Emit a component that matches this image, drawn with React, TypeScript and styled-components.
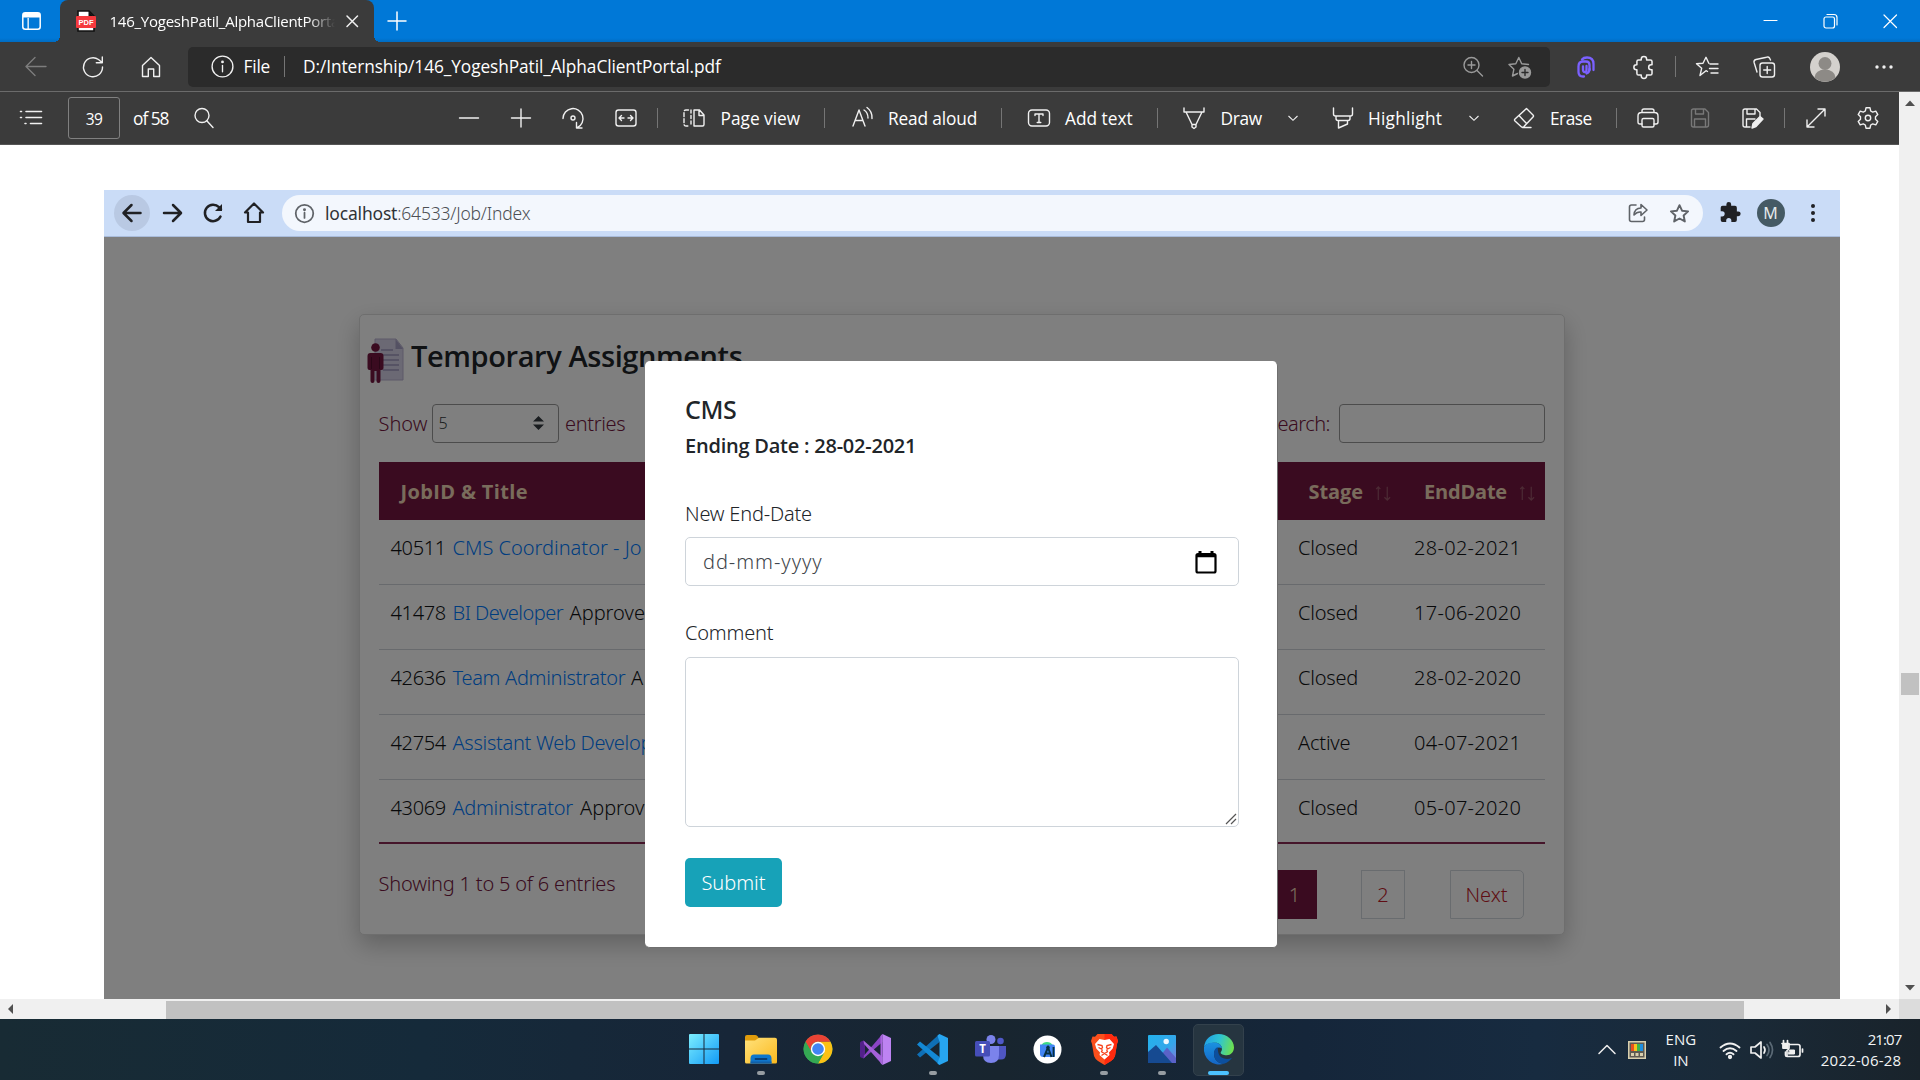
import React from 'react';
import styled, { createGlobalStyle } from 'styled-components';

const UI = '"Open Sans", "Noto Sans", sans-serif';
const DOC = '"Noto Sans", "Open Sans", sans-serif';

const GlobalStyle = createGlobalStyle`
  * { box-sizing: border-box; }
  body { margin: 0; width: 1920px; height: 1080px; overflow: hidden; background: #fff; }
  svg { display: block; flex: none; overflow: visible; }
`;

const Screen = styled.div`
  display: flex;
  flex-direction: column;
  width: 1920px;
  height: 1080px;
  overflow: hidden;
  font-family: ${UI};
`;

/* ---------- shared ---------- */

const Slot = styled.span<{ $ml?: number; $mr?: number; $w?: number; $c?: string }>`
  display: flex;
  flex: none;
  align-items: center;
  justify-content: center;
  width: ${p => p.$w ?? 24}px;
  height: 24px;
  margin-left: ${p => p.$ml ?? 0}px;
  margin-right: ${p => p.$mr ?? 0}px;
  color: ${p => p.$c ?? '#f0f0f0'};
`;

const Label = styled.span<{ $ml?: number; $w: number; $ls?: number }>`
  flex: none;
  width: ${p => p.$w}px;
  margin-left: ${p => p.$ml ?? 0}px;
  font-size: 17.3px;
  line-height: 24px;
  letter-spacing: ${p => p.$ls ?? 0}px;
  white-space: nowrap;
  color: #fff;
`;

const Rule = styled.span<{ $ml?: number; $h?: number }>`
  flex: none;
  width: 1px;
  height: ${p => p.$h ?? 20}px;
  margin-left: ${p => p.$ml ?? 0}px;
  background: #757575;
`;

const Spacer = styled.span`
  flex: 1;
`;

type IconProps = { size?: number; sw?: number; fill?: string; children: React.ReactNode };
const Icon = ({ size = 24, sw = 1.4, fill = 'none', children }: IconProps) => (
  <svg width={size} height={size} viewBox="0 0 24 24" fill={fill} stroke="currentColor" strokeWidth={sw} strokeLinecap="round" strokeLinejoin="round">
    {children}
  </svg>
);

/* ---------- browser frame ---------- */

const TabStrip = styled.div`
  display: flex;
  flex: none;
  align-items: center;
  height: 42px;
  padding-bottom: 1px;
  background: linear-gradient(#0078d7 0 38px, #006cc2 42px);
`;

const Tab = styled.div`
  position: relative;
  display: flex;
  align-items: center;
  width: 314px;
  height: 42px;
  margin: 0 0 -1px 19px;
  padding: 0 0 1px 16px;
  border-radius: 8px 8px 0 0;
  background: #3b3b3b;
  &::before, &::after {
    content: '';
    position: absolute;
    bottom: 0;
    width: 6px;
    height: 6px;
  }
  &::before { left: -6px; background: radial-gradient(circle at 0 0, transparent 6px, #3b3b3b 6px); }
  &::after { right: -6px; background: radial-gradient(circle at 100% 0, transparent 6px, #3b3b3b 6px); }
`;

const TabTitle = styled.span`
  width: 225px;
  margin-left: 13.5px;
  overflow: hidden;
  font-size: 15px;
  line-height: 24px;
  letter-spacing: -0.24px;
  white-space: nowrap;
  color: #fff;
  mask-image: linear-gradient(90deg, #000 198px, transparent 225px);
`;

const AddressRow = styled.div`
  display: flex;
  flex: none;
  align-items: center;
  height: 50px;
  border-bottom: 1px solid #6b6b6b;
  background: #3b3b3b;
`;

const AddressBox = styled.div`
  display: flex;
  flex: none;
  align-items: center;
  width: 1362px;
  height: 40px;
  margin-left: 25px;
  padding: 0 18px 0 22px;
  border-radius: 5px;
  background: #2b2b2b;
`;

const Body = styled.div`
  display: flex;
  flex: none;
  height: 907px;
`;

const Viewer = styled.div`
  display: flex;
  flex-direction: column;
  width: 1899px;
  background: #fff;
`;

const PdfBar = styled.div`
  display: flex;
  flex: none;
  align-items: center;
  height: 53px;
  border-bottom: 1px solid #555;
  background: #3b3b3b;
  ${Label} { margin-top: 2px; }
`;

const PageInput = styled.span`
  display: flex;
  flex: none;
  align-items: center;
  justify-content: center;
  width: 52px;
  height: 42px;
  margin-left: 25px;
  padding-top: 2px;
  border: 1px solid #808080;
  border-radius: 3px;
  font-size: 15.5px;
  letter-spacing: -0.6px;
  color: #fff;
`;

const VScroll = styled.div`
  display: flex;
  flex-direction: column;
  align-items: center;
  width: 21px;
  background: #f0f0f0;
  color: #505050;
`;

const VThumb = styled.div`
  width: 18px;
  height: 22px;
  margin-top: 564px;
  background: #c1c1c1;
`;

const HScroll = styled.div`
  display: flex;
  flex: none;
  align-items: center;
  height: 20px;
  background: #f0f0f0;
  color: #505050;
`;

const HThumb = styled.div`
  width: 1578px;
  height: 18px;
  margin: 2px 0 0 154px;
  background: #c1c1c1;
`;

const ScrollCorner = styled.div`
  width: 21px;
  height: 20px;
  background: #dcdcdc;
`;

/* ---------- document page ---------- */

const Sheet = styled.div`
  display: flex;
  flex-direction: column;
  width: 1736px;
  height: 809px;
  margin: 45px 0 0 104px;
`;

const ChromeBar = styled.div`
  display: flex;
  flex: none;
  align-items: center;
  height: 47px;
  border-bottom: 1px solid #a9bcdb;
  background: #cadcf7;
`;

const BackCircle = styled.span`
  display: flex;
  align-items: center;
  justify-content: center;
  width: 36px;
  height: 36px;
  margin-left: 10px;
  border-radius: 50%;
  background: #b9c9e3;
  color: #202124;
`;

const Pill = styled.div`
  display: flex;
  align-items: center;
  width: 1421px;
  height: 36px;
  margin-left: 16px;
  padding: 0 12px 0 11.5px;
  border-radius: 18px;
  background: #f3f7fd;
`;

const Url = styled.span`
  margin-left: 9.5px;
  font-family: ${DOC};
  font-size: 17.5px;
  font-weight: 300;
  line-height: 24px;
  letter-spacing: -0.19px;
  color: #4c4f54;
  b { font-weight: 400; color: #303236; }
`;

const Monogram = styled.span`
  display: flex;
  align-items: center;
  justify-content: center;
  width: 28px;
  height: 28px;
  margin-left: 14.5px;
  border-radius: 50%;
  background: #455a64;
  font-family: ${DOC};
  font-size: 16px;
  color: #e4e9eb;
`;

const Site = styled.div`
  position: relative;
  flex: 1;
  overflow: hidden;
  background: #fff;
  font-family: ${DOC};
  font-size: 20px;
  font-weight: 300;
  line-height: 27px;
  color: #101214;
`;

const Card = styled.div`
  width: 1206px;
  height: 621px;
  margin: 77px 0 0 254.5px;
  padding: 23px 18.5px 0 19px;
  border: 1px solid #dcdcdc;
  border-radius: 5px;
  background: #fff;
  box-shadow: 0 10px 24px rgba(0, 0, 0, 0.24);
`;

const TitleRow = styled.div`
  display: flex;
  height: 45px;
  margin-left: -11.5px;
`;

const Title = styled.h4`
  margin: -2px 0 0 7px;
  font-family: ${UI};
  font-size: 29px;
  font-weight: 600;
  line-height: 40px;
  letter-spacing: -0.4px;
  white-space: nowrap;
  color: #212529;
`;

const Controls = styled.div`
  display: flex;
  align-items: center;
  height: 39px;
  margin-top: 20.5px;
  color: #741640;
`;

const LengthSelect = styled.span`
  display: flex;
  align-items: center;
  justify-content: space-between;
  width: 127px;
  height: 39px;
  margin: 0 5.5px 0 5px;
  padding: 0 14px 0 5px;
  border: 1.5px solid #999;
  border-radius: 4px;
  font-size: 16px;
  color: #343a40;
`;

const Tight = styled.span<{ $ls: number }>`
  letter-spacing: ${p => p.$ls}px;
`;

const SearchInput = styled.span`
  width: 206px;
  height: 39px;
  margin-left: 9px;
  border: 1.5px solid #999;
  border-radius: 4px;
`;

const columns = '1fr 116px 131px';

const Table = styled.div`
  margin-top: 19.5px;
`;

const HeadRow = styled.div`
  display: grid;
  grid-template-columns: ${columns};
  align-items: center;
  height: 58px;
  padding-left: 22px;
  background: #741640;
  font-family: ${UI};
  font-weight: 700;
  color: #f3d9b8;
`;

const HeadCell = styled.div<{ $ml?: number; $ls: number }>`
  display: flex;
  align-items: center;
  gap: 11px;
  margin-left: ${p => p.$ml ?? 0}px;
  letter-spacing: ${p => p.$ls}px;
  white-space: nowrap;
  svg { margin-top: 3px; }
`;

const BodyRow = styled.div`
  display: grid;
  grid-template-columns: ${columns};
  height: 65px;
  padding: 13.5px 0 0 12px;
  border-bottom: 1px solid #d0d5da;
  white-space: nowrap;
  &:last-child { height: 64px; border-bottom: 2px solid #8a2a55; }
`;

const TitleCell = styled.div`
  display: flex;
`;

const JobId = styled.span`
  flex: none;
  width: 62px;
  letter-spacing: -0.35px;
`;

const JobLink = styled.a<{ $w: number; $ls: number }>`
  flex: none;
  width: ${p => p.$w}px;
  letter-spacing: ${p => p.$ls}px;
  color: #007bff;
`;

const Footer = styled.div`
  display: flex;
  justify-content: space-between;
  padding-right: 21.5px;
  color: #741640;
`;

const Summary = styled.span`
  margin-top: 26px;
  letter-spacing: -0.2px;
`;

const Pager = styled.div`
  display: flex;
  gap: 44.5px;
  margin-top: 26px;
`;

const PageButton = styled.span<{ $w: number; $on?: boolean; $r?: number }>`
  display: flex;
  align-items: center;
  justify-content: center;
  width: ${p => p.$w}px;
  height: 49px;
  border: 1px solid ${p => (p.$on ? '#741640' : '#d3d9de')};
  border-radius: 0 ${p => p.$r ?? 0}px ${p => p.$r ?? 0}px 0;
  background: ${p => (p.$on ? '#741640' : 'transparent')};
  color: ${p => (p.$on ? '#f3d9b8' : '#c01a28')};
`;

const Backdrop = styled.div`
  position: absolute;
  inset: 0;
  background: rgba(0, 0, 0, 0.5);
`;

const Modal = styled.form`
  position: absolute;
  top: 124px;
  left: 541px;
  display: flex;
  flex-direction: column;
  align-items: flex-start;
  width: 633px;
  height: 587px;
  padding: 33px 0 0 40px;
  border: 1px solid #6f6f6f;
  border-width: 0 1px 1px 0;
  border-radius: 5px;
  background: #fff;
  color: #212529;
`;

const ModalTitle = styled.h5`
  margin: 0;
  font-size: 25px;
  font-weight: 500;
  line-height: 30px;
  letter-spacing: -0.4px;
`;

const EndingDate = styled.h6`
  margin: 8px 0 0;
  font-family: ${UI};
  font-size: 20px;
  font-weight: 600;
  line-height: 27px;
  letter-spacing: -0.23px;
`;

const FieldLabel = styled.label<{ $mt: number }>`
  height: 27px;
  margin-top: ${p => p.$mt}px;
  letter-spacing: -0.2px;
`;

const DateField = styled.div`
  display: flex;
  align-items: center;
  justify-content: space-between;
  width: 554px;
  height: 49px;
  margin-top: 10.5px;
  padding: 0 21px 0 17px;
  border: 1.5px solid #ced4da;
  border-radius: 5px;
  letter-spacing: 0.95px;
  color: #3f464c;
`;

const CommentField = styled.div`
  display: flex;
  align-items: flex-end;
  justify-content: flex-end;
  width: 554px;
  height: 170px;
  margin-top: 11px;
  padding: 1px;
  border: 1.5px solid #ced4da;
  border-radius: 5px;
  color: #555;
`;

const Submit = styled.button`
  width: 97px;
  height: 49px;
  margin-top: 30.5px;
  padding: 0;
  border: 0;
  border-radius: 5px;
  background: #17a2b8;
  font: 300 20px/27px ${DOC};
  color: #fff;
`;

/* ---------- taskbar ---------- */

const Taskbar = styled.div`
  display: flex;
  flex: none;
  align-items: center;
  height: 61px;
  padding-left: 678.5px;
  background: linear-gradient(90deg, #182b34 0, #152a3a 22%, #172638 38%, #18252f 52%, #15263a 68%, #172b40 80%, #1a2a38 90%, #19232b 100%);
`;

const TaskButton = styled.div<{ $active?: boolean }>`
  display: flex;
  flex-direction: column;
  align-items: center;
  justify-content: flex-end;
  width: 51.2px;
  height: 52px;
  margin-right: 6px;
  border: 1px solid ${p => (p.$active ? '#33414c' : 'transparent')};
  border-radius: 5px;
  background: ${p => (p.$active ? '#263540' : 'transparent')};
`;

const IconBox = styled.span`
  display: flex;
  flex: none;
  align-items: center;
  height: 31px;
`;

const Indicator = styled.span<{ $kind?: 'open' | 'active' }>`
  flex: none;
  width: ${p => (p.$kind === 'active' ? 21 : 8)}px;
  height: 4px;
  margin-top: 6px;
  border-radius: 2px;
  background: ${p => (p.$kind === 'active' ? '#4cc2ff' : p.$kind === 'open' ? '#979da2' : 'transparent')};
`;

const TrayText = styled.span<{ $ml: number; $w: number; $right?: boolean }>`
  flex: none;
  width: ${p => p.$w}px;
  margin: 1px 0 0 ${p => p.$ml}px;
  font-size: 15px;
  line-height: 21px;
  text-align: ${p => (p.$right ? 'right' : 'center')};
  white-space: nowrap;
  color: #f2f4f5;
`;

/* ---------- drawings ---------- */

const Info = ({ size = 24, sw = 1.3 }: { size?: number; sw?: number }) => (
  <Icon size={size} sw={sw}><circle cx="12" cy="12" r="10" /><path d="M12 11v6" /><circle cx="12" cy="7.6" r=".7" fill="currentColor" /></Icon>
);

const Chevron = () => (
  <svg width="12" height="12" viewBox="0 0 12 12" fill="none" stroke="currentColor" strokeWidth="1.1"><path d="M1.500 4 6 8.300 10.500 4" /></svg>
);

const Sort = () => (
  <svg width="18" height="17" viewBox="0 0 18 18" fill="none" stroke="#985468" strokeWidth="1.300">
    <path d="M4 17V3M1.800 5.500 4 3l2.200 2.500M13.500 3v14M10.500 14l3 3 3-3" />
  </svg>
);

const PdfIcon = () => (
  <svg width="20" height="22" viewBox="0 0 20 22">
    <path d="M2 1h11l5 5v15H2z" fill="#fff" stroke="#111" strokeWidth="1.600" />
    <path d="M12.500 1v5.500H18z" fill="#111" />
    <rect x="0" y="6" width="20" height="12" rx="1" fill="#f5393d" />
    <text x="10" y="15" fontSize="7.500" fontWeight="700" fontFamily="Liberation Sans, sans-serif" textAnchor="middle" fill="#fff" textLength="15">PDF</text>
  </svg>
);

const JobIcon = () => (
  <svg width="37" height="45" viewBox="0 0 37 45">
    <path d="M8 1h21l7 9v32H8z" fill="#d7d3e8" stroke="#b9b3d2" />
    <path d="M28.500 1v10H36z" fill="#a9a2c6" />
    <path d="M14 12h12M16 17h16M16 22h16M16 27h16M16 32h16" stroke="#a098bd" strokeWidth="1.500" />
    <circle cx="8.500" cy="9.500" r="4.300" fill="#741640" />
    <path d="M3.500 15h10q3 0 3 3v12q0 2-2 2h-1v11q0 2-2 2t-2-2V33h-2v10q0 2-2 2t-2-2V32h-1q-2 0-2-2V18q0-3 3-3z" fill="#741640" />
    <path d="M4.500 19v12M12.500 19v12" stroke="#4c0d29" strokeWidth=".8" />
  </svg>
);

const WindowsIcon = () => (
  <svg width="30" height="30" viewBox="0 0 30 30">
    <defs><linearGradient id="win" gradientUnits="userSpaceOnUse" x1="0" y1="0" x2="30" y2="30"><stop offset="0" stopColor="#7ceefe" /><stop offset="1" stopColor="#129af6" /></linearGradient></defs>
    <path d="M1 0h13.500v14.500H0V1q0-1 1-1zM15.500 0H29q1 0 1 1v13.500H15.500zM0 15.500h14.500V30H1q-1 0-1-1zM15.500 15.500H30V29q0 1-1 1H15.500z" fill="url(#win)" />
  </svg>
);

const ExplorerIcon = () => (
  <svg width="32" height="29" viewBox="0 0 32 29">
    <defs><linearGradient id="fold" x1="0" y1="0" x2="1" y2="1"><stop offset="0" stopColor="#ffe27c" /><stop offset="1" stopColor="#fbb91e" /></linearGradient></defs>
    <path d="M0 2q0-2 2-2h8q1.500 0 2.500 1.200L14.500 4 12 9H0z" fill="#e09c0b" />
    <path d="M0 5.500h10l4-2.700h16q2 0 2 2V27q0 1.500-1.500 1.500h-29Q0 28.500 0 27z" fill="url(#fold)" />
    <path d="M5.500 28.500v-5q0-4 3.500-4h14q3.500 0 3.500 4v5z" fill="#0f76cc" />
    <path d="M5.500 28.500v-2h21v2z" fill="#1260a8" />
    <path d="M10.500 24h11" stroke="#0a3f77" strokeWidth="1.800" strokeLinecap="round" />
  </svg>
);

const ChromeIcon = () => (
  <svg width="30" height="30" viewBox="0 0 48 48">
    <circle cx="24" cy="24" r="23" fill="#34a853" />
    <path d="M24 12.500h19.920A23 23 0 0 1 24 47l9.960-17.250z" fill="#fbc116" />
    <path d="M4.080 12.500a23 23 0 0 1 39.840 0H24a11.500 11.500 0 0 0-9.960 17.250z" fill="#ea4335" />
    <path d="M4.080 12.500A23 23 0 0 0 24 47l9.960-17.250-19.920 0z" fill="#34a853" />
    <circle cx="24" cy="24" r="11.500" fill="#fff" /><circle cx="24" cy="24" r="9.300" fill="#4285f4" />
  </svg>
);

const VisualStudioIcon = () => (
  <svg width="31" height="31" viewBox="0 0 31 31">
    <path d="M0 9q0-1 1-1.500L3.500 6.500 5 8v15l-1.500 1.500L1 23.500q-1-.5-1-1.500z" fill="#52218a" />
    <path d="M3.500 24.500 22.500 8V0L4 21.500z" fill="#8b45c4" />
    <path d="M3.500 6.500 22.500 23v8L4 10z" fill="#a361d8" />
    <path d="M22.500 0 31 4v23l-8.500 4z" fill="#bd83f2" />
    <path d="M22.500 0v31l-2-2V2z" fill="#a767dd" />
  </svg>
);

const CodeIcon = () => (
  <svg width="31" height="31" viewBox="0 0 31 31">
    <path d="M0 20.500 22.500 0v8L3 23.500z" fill="#0f6fb5" />
    <path d="M0 10.500 22.500 31v-8L3 7.500z" fill="#1388d4" />
    <path d="M22.500 0 31 4v23l-8.500 4-2-1.500L22.500 23V8l-2-6.500z" fill="#27a5f0" />
  </svg>
);

const TeamsIcon = () => (
  <svg width="31" height="29" viewBox="0 0 31 29">
    <circle cx="25.500" cy="6" r="3.300" fill="#5059c9" />
    <path d="M21 11h10v8q0 5.500-5 5.500h-5z" fill="#4f56c2" />
    <circle cx="16" cy="4.500" r="4.500" fill="#7b83eb" />
    <path d="M8 11h16v9q0 8-8 8t-8-8z" fill="#7b83eb" />
    <rect x="0" y="6" width="15" height="15.500" rx="1.500" fill="#464eb8" />
    <text x="7.500" y="17.800" fontSize="11.500" fontWeight="700" fontFamily="Open Sans, sans-serif" textAnchor="middle" fill="#fff">T</text>
  </svg>
);

const StudioIcon = () => (
  <svg width="29" height="29" viewBox="0 0 29 29">
    <circle cx="14.500" cy="14.500" r="14" fill="#fff" />
    <path d="M8.500 10a6 5 0 0 1 11 0z" fill="#3ddc84" />
    <path d="M7 9.500h13q2 0 2 2V21q0 1-1 1H10q-3 0-3-3z" fill="#4285f4" />
    <path d="M11 22 15 12.500 18.500 22M12.500 18.500h5" stroke="#073042" strokeWidth="2" fill="none" />
    <path d="M20.500 12V22" stroke="#073042" strokeWidth="1.800" />
    <circle cx="15" cy="12.500" r="1.800" fill="#073042" />
  </svg>
);

const BraveIcon = () => (
  <svg width="27" height="31" viewBox="0 0 27 31">
    <path d="M6.500 0h14l2.500 2.800 2.500-.3L27 7l-1 3-2 12q-1 3-4 5l-6.500 4L7 27q-3-2-4-5L1 10 0 7l1.500-4.500 2.500.3z" fill="#fb4f1c" />
    <path d="M13.500 0h7l2.500 2.800 2.500-.3L27 7l-1 3-2 12q-1 3-4 5l-6.500 4z" fill="#ff2a0e" />
    <path d="M8.500 5 13.500 6 18.500 5l4.500 5-1.300 4.500-3.700 4 .5 2.500-5 4.500L8.500 21l.5-2.500-3.700-4L4 10z" fill="#fff" />
    <path d="M6.500 10.500 11 11.500l.5 2-1.200 1.500-2.800-1.500M20.500 10.500 16 11.500l-.5 2 1.200 1.500 2.800-1.500M11.500 15.500l-1 2.300 3 1.700 3-1.700-1-2.300M13.500 19.500l-3 2M13.500 19.500l3 2" fill="none" stroke="#f8421a" strokeWidth="1.300" />
  </svg>
);

const PhotosIcon = () => (
  <svg width="28" height="28" viewBox="0 0 28 28">
    <defs><linearGradient id="pic" x1="0" y1="0" x2="1" y2="1"><stop offset="0" stopColor="#22b1ec" /><stop offset=".6" stopColor="#36a6ea" /><stop offset="1" stopColor="#8b76d6" /></linearGradient></defs>
    <rect width="28" height="28" rx="1" fill="url(#pic)" />
    <path d="M13 20 19 12.500 28 23v5H13z" fill="#5a62c8" />
    <path d="M0 17 8 10 24 28H0z" fill="#164a91" />
    <circle cx="18.200" cy="6.500" r="2.700" fill="#f0f8ff" />
  </svg>
);

const EdgeIcon = () => (
  <svg width="31" height="31" viewBox="0 0 31 31">
    <defs>
      <linearGradient id="e1" x1="0" y1=".3" x2="1" y2=".5"><stop offset="0" stopColor="#219fe6" /><stop offset=".5" stopColor="#2fc5d1" /><stop offset="1" stopColor="#6ee04e" /></linearGradient>
      <linearGradient id="e2" x1="0" y1="0" x2="0" y2="1"><stop offset="0" stopColor="#1a92e0" /><stop offset="1" stopColor="#1565c5" /></linearGradient>
    </defs>
    <path d="M1 13C2 5 8 0 15.500 0 24 0 31 6 31 13.500c0 4.500-3.300 7.700-7.300 7.700-3.500 0-6-1.200-6-2.500 0-1 1.300-1.500 1.300-4 0-3.200-3-5.900-6.800-5.900C7.500 8.800 3 10 1 13z" fill="url(#e1)" />
    <path d="M1 13c2-3.500 6.500-4.500 10-4.500 4.500 0 8 2.800 8 6C15 11.500 11 15 11 20c0 6 5 10 10 9.800A15.500 15.500 0 0 1 1 13z" fill="url(#e2)" />
    <path d="M14.500 13C11.500 14.500 11 17.500 11 20c0 6 5 10 10 9.800 3.500-1 6.500-3.500 8-6-5 2.500-12 1-13.500-4.500-.7-2.500-.5-4.500-1-6.300z" fill="#0c4f9e" />
  </svg>
);

const apps: { name: string; draw: () => React.ReactElement; state?: 'open' | 'active' }[] = [
  { name: 'start', draw: WindowsIcon },
  { name: 'explorer', draw: ExplorerIcon, state: 'open' },
  { name: 'chrome', draw: ChromeIcon },
  { name: 'visual-studio', draw: VisualStudioIcon },
  { name: 'code', draw: CodeIcon, state: 'open' },
  { name: 'teams', draw: TeamsIcon },
  { name: 'android-studio', draw: StudioIcon },
  { name: 'brave', draw: BraveIcon, state: 'open' },
  { name: 'photos', draw: PhotosIcon, state: 'open' },
  { name: 'edge', draw: EdgeIcon, state: 'active' },
];

const jobs = [
  { id: '40511', title: 'CMS Coordinator - Jo', w: 210, ls: 0, stage: 'Closed', end: '28-02-2021' },
  { id: '41478', title: 'BI Developer', w: 117, ls: -0.5, stage: 'Closed', end: '17-06-2020', status: 'Approve' },
  { id: '42636', title: 'Team Administrator', w: 178.5, ls: -0.3, stage: 'Closed', end: '28-02-2020', status: 'A' },
  { id: '42754', title: 'Assistant Web Develop', w: 230, ls: -0.3, stage: 'Active', end: '04-07-2021' },
  { id: '43069', title: 'Administrator', w: 127.5, ls: -0.3, stage: 'Closed', end: '05-07-2020', status: 'Approve' },
];

const PUZZLE = 'M9 5.500V4.800a2.500 2.500 0 0 1 5 0v.7h3.500a1.500 1.500 0 0 1 1.500 1.500v3h-.8a2.300 2.300 0 0 0 0 4.600h.8v3.400a1.500 1.500 0 0 1-1.500 1.500H14v.7a2.500 2.500 0 0 1-5 0v-.7H6.500A1.500 1.500 0 0 1 5 18v-3.400h-.5a2.300 2.300 0 0 1 0-4.600H5V7a1.500 1.500 0 0 1 1.500-1.500z';
const STAR = 'M12 2.500l2.900 6.300 6.900.8-5.100 4.700 1.400 6.800L12 17.700l-6.100 3.400 1.400-6.800-5.100-4.700 6.900-.8z';

export default function App() {
  return (
    <Screen>
      <GlobalStyle />
      <TabStrip>
        <Slot $ml={19.5} $mr={-2.5} $c="#fff">
          <svg width="19" height="18" viewBox="0 0 19 18"><rect x=".8" y=".8" width="17.400" height="16.400" rx="2.500" fill="none" stroke="#fff" strokeWidth="1.500" /><path d="M1 1h17v4.500H1zM5.500 5v12h1.300V5z" fill="#fff" /></svg>
        </Slot>
        <Tab>
          <PdfIcon />
          <TabTitle>146_YogeshPatil_AlphaClientPortal.pdf</TabTitle>
          <Slot $ml={5}><Icon sw={1.500}><path d="M7 7l10.500 10.500M17.500 7 7 17.500" /></Icon></Slot>
        </Tab>
        <Slot $ml={11} $c="#fff"><Icon sw={1.500}><path d="M12 3v18M3 12h18" /></Icon></Slot>
        <Spacer />
        <Slot $c="#fff"><Icon sw={1.200}><path d="M5 11.500h13" /></Icon></Slot>
        <Slot $ml={36} $c="#fff"><Icon sw={1.200}><rect x="5" y="8" width="10.500" height="11" rx="2" /><path d="M8 5.500h7q3 0 3 3V16" /></Icon></Slot>
        <Slot $ml={36} $mr={17} $c="#fff"><Icon sw={1.200}><path d="M5 6l12.500 12.500M17.500 6 5 18.500" /></Icon></Slot>
      </TabStrip>

      <AddressRow>
        <Slot $ml={24} $c="#7d7d7d"><Icon><path d="M22 11.500H2.500M11 2.500l-9 9 9 9" /></Icon></Slot>
        <Slot $ml={33}><Icon><path d="M21.500 12A9.500 9.500 0 1 1 17.500 4.500l3.500 3M21.300 2v5.800h-6" /></Icon></Slot>
        <Slot $ml={34}><Icon><path d="M3.500 10.500 12 2.500l8.500 8V21.500h-5.800V14H9.300v7.500H3.500z" /></Icon></Slot>
        <AddressBox>
          <Slot><Info size={25} /></Slot>
          <Label $ml={9.500} $w={28} $ls={-0.200}>File</Label>
          <Rule $ml={12.500} $h={21} />
          <Label $ml={18} $w={430} $ls={-0.080}>D:/Internship/146_YogeshPatil_AlphaClientPortal.pdf</Label>
          <Spacer />
          <Slot $c="#9a9a9a"><Icon><circle cx="10.500" cy="10" r="7.500" /><path d="M16 15.500l5.500 5.500M10.500 6.500v7M7 10h7" /></Icon></Slot>
          <Slot $ml={23} $c="#9a9a9a"><Icon><path d="M9.500 18.500 4.500 21l1.400-6.800L1 9.500l6.800-.8L10.800 2.500l2.900 6.200 6.800.8" /><circle cx="17" cy="17.500" r="5.500" fill="#9a9a9a" /><path d="M17 14.500v6M14 17.500h6" stroke="#2b2b2b" /></Icon></Slot>
        </AddressBox>
        <Slot $ml={24} $c="#7b61ff"><Icon sw={2.300}><path d="M8 4.500Q9.500 2.500 13 2.500q6.500 0 6.500 6.500v6" /><path d="M15.500 15V10q0-3.500-3.500-3.500H9q-4.500 0-4.500 5V17q0 4.500 4.500 4.500h1" /><path d="M12.500 11v4q0 2-1.700 2T9 15v-3.500" /><path d="M15.500 14q0 3.500-3 4.500" /></Icon></Slot>
        <Slot $ml={34}><Icon><path d={PUZZLE} transform="translate(-.5 -1) scale(1.080)" /></Icon></Slot>
        <Rule $ml={19} $h={21} />
        <Slot $ml={19}><Icon><path d="M12.500 16.500l-1.500-.8-6 4.800 1.700-7.300L1.500 8.800l6.500-.6L11 2.300l2.800 5.900M15 9h8M14.500 13.500H23M16 18h7" /></Icon></Slot>
        <Slot $ml={33}><Icon><rect x="8" y="8" width="14.500" height="14" rx="2.500" /><path d="M15.200 11.500v7M11.700 15h7M18.500 5l-1-2q-1-1.500-3-.8L4 4.500q-2.500.8-1.900 3L5 17" /></Icon></Slot>
        <Slot $ml={34} $w={30}>
          <svg width="30" height="30" viewBox="0 0 30 30"><circle cx="15" cy="15" r="15" fill="#d4d1cd" /><circle cx="15" cy="11.500" r="6.500" fill="#8d8a86" /><path d="M4.500 25.500a10.500 8 0 0 1 21 0A15 15 0 0 1 4.500 25.500z" fill="#8d8a86" /></svg>
        </Slot>
        <Slot $ml={32}><Icon sw={0} fill="currentColor"><circle cx="5" cy="12" r="1.700" /><circle cx="12" cy="12" r="1.700" /><circle cx="19" cy="12" r="1.700" /></Icon></Slot>
      </AddressRow>

      <Body>
        <Viewer>
          <PdfBar>
            <Slot $ml={19}><Icon sw={1.600}><path d="M7 5.500H22.500M7 11.500H22.500M11.500 17.500h11M1.500 5.500h1M1.500 11.500h1M6 17.500h1" /></Icon></Slot>
            <PageInput>39</PageInput>
            <Label $ml={13} $w={36} $ls={-1}>of 58</Label>
            <Slot $ml={22.500}><Icon><circle cx="10" cy="9.500" r="7" /><path d="M14.800 14.700 21 21.500" /></Icon></Slot>
            <Slot $ml={241.500}><Icon><path d="M2.500 12h19" /></Icon></Slot>
            <Slot $ml={28}><Icon><path d="M12 3v18M2.500 12h19" /></Icon></Slot>
            <Slot $ml={28}><Icon><path d="M2 12.500A10 10 0 1 1 16.500 21.500M15.500 16.500v5.500h5.500" /><circle cx="12" cy="12" r="2" /></Icon></Slot>
            <Slot $ml={28.500}><Icon><rect x="2" y="4" width="20" height="16" rx="2.500" /><path d="M5.500 12H10M7.500 9.500 5 12l2.500 2.500M18.500 12H14M16.500 9.500 19 12l-2.500 2.500" /></Icon></Slot>
            <Rule $ml={19} />
            <Slot $ml={24.500}><Icon><path d="M13 4h4.500L22 9v9.500q0 1.500-1.500 1.500H12V4zM17 4v5.500h5" /><path d="M9 4v16" strokeDasharray="3 2.500" /><path d="M6.500 4H4Q2 4 2 6v12q0 2 2 2h2.500" strokeDasharray="4 2" /></Icon></Slot>
            <Label $ml={14.500} $w={80}>Page view</Label>
            <Rule $ml={23.500} />
            <Slot $ml={25}><Icon><path d="M3 20 9 4l6 16M5 14.500h8M14 4q4 2.500 4 8M17 1.500q5.500 4 5 11" /></Icon></Slot>
            <Label $ml={14} $w={90} $ls={-0.150}>Read aloud</Label>
            <Rule $ml={23} />
            <Slot $ml={25}><Icon><rect x="1.500" y="4" width="21" height="16" rx="3.500" /><path d="M8 9.500V8h8v1.500M12 8v8.500M10.200 16.500h3.600" /></Icon></Slot>
            <Label $ml={14} $w={69}>Add text</Label>
            <Rule $ml={23} />
            <Slot $ml={24}><Icon><path d="M2 2v4h20V2M4 6l6 12.500V21l2 1.500 2-1.500v-2.500L20 6M10 18.500h4" /></Icon></Slot>
            <Label $ml={14.500} $w={42} $ls={-0.300}>Draw</Label>
            <Slot $ml={24.500} $w={12}><Chevron /></Slot>
            <Slot $ml={32}><Icon><path d="M2.500 2v6q0 2 2 2h15q2 0 2-2V2M5 10v2.500q0 2 2 2h10q2 0 2-2V10M7.500 14.500v7.500l9-4v-3.500" /></Icon></Slot>
            <Label $ml={13} $w={75} $ls={0.250}>Highlight</Label>
            <Slot $ml={25} $w={12}><Chevron /></Slot>
            <Slot $ml={32}><Icon><path d="M14.500 2.500l6.500 6.500q1 1 0 2L12 20.500q-1.500 1.500-3 0L3 15q-1-1 0-2zM7 9.500l7.500 8M10.500 21.500H19" /></Icon></Slot>
            <Label $ml={14} $w={42} $ls={-0.500}>Erase</Label>
            <Rule $ml={23.500} />
            <Slot $ml={19.500}><Icon><path d="M6 6.500V5q0-2 2-2h8q2 0 2 2v1.500M6 18H4q-2 0-2-2v-6q0-3.500 3.500-3.500h13Q22 6.500 22 10v6q0 2-2 2h-2" /><rect x="6" y="12.500" width="12" height="8.500" rx="1.500" /></Icon></Slot>
            <Slot $ml={28} $c="#787878"><Icon><path d="M3.500 5q0-2 2-2H17l3.500 3.500V19q0 2-2 2h-13q-2 0-2-2zM7.500 3v5h8V3M6.500 21v-8h11v8" /></Icon></Slot>
            <Slot $ml={28}><Icon><path d="M10 21H5q-2 0-2-2V5q0-2 2-2h11.500L20 6.500V10M7 3v5h8V3M6.500 21v-8H15" /><path d="M12 22l1-4.500 7-7 3 2.500-7 7.500z" fill="currentColor" /></Icon></Slot>
            <Rule $ml={20} />
            <Slot $ml={19}><Icon><path d="M3 21 21 3M14 3h7v7M10 21H3v-7" /></Icon></Slot>
            <Slot $ml={28}><Icon><circle cx="12" cy="12" r="2.700" /><path d="M10 1.800h4l.7 3.200 2 1.100 3.100-1 2 3.500-2.300 2.200v2.400l2.300 2.200-2 3.500-3.100-1-2 1.100-.7 3.200h-4l-.7-3.200-2-1.100-3.100 1-2-3.500 2.300-2.200v-2.400L2.200 8.600l2-3.500 3.100 1 2-1.100z" /></Icon></Slot>
          </PdfBar>

          <Sheet>
            <ChromeBar>
              <BackCircle><Icon sw={2.500}><path d="M20.500 12H4M11.500 4 3.500 12l8 8" /></Icon></BackCircle>
              <Slot $ml={11} $c="#202124"><Icon sw={2.500}><path d="M3 12H19.500M12 4l8 8-8 8" /></Icon></Slot>
              <Slot $ml={16} $c="#202124"><Icon sw={2.500}><path d="M19.500 15.500A8.200 8.200 0 1 1 18 6.200l2 2" /><path d="M21 3v7h-7z" fill="currentColor" strokeWidth="0" /></Icon></Slot>
              <Slot $ml={17} $c="#202124"><Icon sw={2.200}><path d="M6 21V11.500H3L12 2.500l9 9h-3V21z" /></Icon></Slot>
              <Pill>
                <Slot $w={22} $c="#5f6368"><Info size={21} sw={2} /></Slot>
                <Url><b>localhost</b>:64533/Job/Index</Url>
                <Spacer />
                <Slot $c="#5f6368"><Icon sw={1.600}><path d="M10 4H5.500Q3.500 4 3.500 6v12.500q0 2 2 2h11q2 0 2-2V16" /><path d="M8 14q.5-7 7-7V3.500L21 9l-6 5.500V11q-4-.5-7 3z" /></Icon></Slot>
                <Slot $ml={17} $c="#5f6368"><Icon size={21} sw={2.200}><path d={STAR} /></Icon></Slot>
              </Pill>
              <Slot $ml={15} $c="#202124"><Icon sw={0} fill="currentColor"><path transform="translate(.8 0) scale(.95)" d="M20.500 11H19V7a2 2 0 0 0-2-2h-4V3.500a2.500 2.500 0 0 0-5 0V5H4a2 2 0 0 0-2 2v3.800h1.500a2.700 2.700 0 0 1 0 5.400H2V20a2 2 0 0 0 2 2h3.800v-1.500a2.700 2.700 0 0 1 5.400 0V22H17a2 2 0 0 0 2-2v-4h1.500a2.500 2.500 0 0 0 0-5z" /></Icon></Slot>
              <Monogram>M</Monogram>
              <Slot $ml={16} $c="#202124"><Icon sw={0} fill="currentColor"><circle cx="12" cy="5" r="2" /><circle cx="12" cy="12" r="2" /><circle cx="12" cy="19" r="2" /></Icon></Slot>
            </ChromeBar>

            <Site>
              <Card>
                <TitleRow>
                  <JobIcon />
                  <Title>Temporary Assignments</Title>
                </TitleRow>
                <Controls>
                  <Tight $ls={0}>Show</Tight>
                  <LengthSelect>
                    5
                    <svg width="11" height="14" viewBox="0 0 11 14"><path d="M0 5.500 5.500 0 11 5.500zM0 8.500h11L5.500 14z" fill="#343a40" /></svg>
                  </LengthSelect>
                  <Tight $ls={-0.350}>entries</Tight>
                  <Spacer />
                  <Tight $ls={-0.500}>Search:</Tight>
                  <SearchInput />
                </Controls>
                <Table>
                  <HeadRow>
                    <HeadCell $ls={0.350}>JobID &amp; Title</HeadCell>
                    <HeadCell $ml={10.500} $ls={-0.100}>Stage <Sort /></HeadCell>
                    <HeadCell $ml={10} $ls={-0.200}>EndDate <Sort /></HeadCell>
                  </HeadRow>
                  {jobs.map(j => (
                    <BodyRow key={j.id}>
                      <TitleCell>
                        <JobId>{j.id}</JobId>
                        <JobLink $w={j.w} $ls={j.ls}>{j.title}</JobLink>
                        {j.status && <span>{j.status}</span>}
                      </TitleCell>
                      <Tight $ls={-0.200}>{j.stage}</Tight>
                      <Tight $ls={0.300}>{j.end}</Tight>
                    </BodyRow>
                  ))}
                </Table>
                <Footer>
                  <Summary>Showing 1 to 5 of 6 entries</Summary>
                  <Pager>
                    <PageButton $w={44} $on>1</PageButton>
                    <PageButton $w={44}>2</PageButton>
                    <PageButton $w={74} $r={5}>Next</PageButton>
                  </Pager>
                </Footer>
              </Card>
              <Backdrop>
                <Modal>
                  <ModalTitle>CMS</ModalTitle>
                  <EndingDate>Ending Date : 28-02-2021</EndingDate>
                  <FieldLabel $mt={40.500}>New End-Date</FieldLabel>
                  <DateField>
                    dd-mm-yyyy
                    <svg width="22" height="24" viewBox="0 0 22 24" fill="none" stroke="#000" strokeWidth="2.200"><rect x="1.500" y="4" width="19" height="18.500" rx="1.500" /><path d="M1.500 5.800h19M5 1v4M17 1v4" strokeWidth="3" /></svg>
                  </DateField>
                  <FieldLabel $mt={33}>Comment</FieldLabel>
                  <CommentField>
                    <svg width="12" height="12" viewBox="0 0 12 12" stroke="currentColor" strokeWidth="1.200"><path d="M1 11 11 1M6 11l5-5" /></svg>
                  </CommentField>
                  <Submit type="button">Submit</Submit>
                </Modal>
              </Backdrop>
            </Site>
          </Sheet>
        </Viewer>
        <VScroll>
          <svg width="10" height="17" viewBox="0 0 10 17"><path d="M0 14 5 8.500 10 14z" fill="currentColor" /></svg>
          <VThumb />
          <Spacer />
          <svg width="10" height="16" viewBox="0 0 10 16"><path d="M0 2 5 7.500 10 2z" fill="currentColor" /></svg>
        </VScroll>
      </Body>
      <HScroll>
        <svg width="12" height="12" viewBox="0 0 12 12"><path d="M13 1 8 6l5 5z" fill="currentColor" /></svg>
        <HThumb />
        <Spacer />
        <svg width="17" height="12" viewBox="0 0 17 12"><path d="M4 1 9 6l-5 5z" fill="currentColor" /></svg>
        <ScrollCorner />
      </HScroll>

      <Taskbar>
        {apps.map(({ name, draw: Draw, state }) => (
          <TaskButton key={name} $active={state === 'active'}>
            <IconBox><Draw /></IconBox>
            <Indicator $kind={state} />
          </TaskButton>
        ))}
        <Slot $ml={344.500}><Icon sw={1.500}><path d="M4 15.500l8-8 8 8" /></Icon></Slot>
        <Slot $ml={9} $w={18}>
          <svg width="18" height="18" viewBox="0 0 18 18"><rect width="18" height="18" fill="#d8cfae" /><rect x="1.500" y="1.500" width="15" height="15" fill="#5d5a52" /><path d="M3 3h3v7H3z" fill="#e8501f" /><path d="M6 3h3v7H6z" fill="#f7c21c" /><path d="M9 3h3v7H9z" fill="#3cb44a" /><path d="M12 3h3v7h-3z" fill="#1e8fe0" /><path d="M3 12h3v3H3zM7.500 12h3v3h-3zM12 12h3v3h-3z" fill="#d8cfae" /></svg>
        </Slot>
        <TrayText $ml={19} $w={32}>ENG<br />IN</TrayText>
        <Slot $ml={21}><Icon sw={1.900}><path d="M2.500 9.500q9.500-8 19 0M5.500 13q6.500-5.500 13 0M8.500 16.300q3.500-3 7 0" /><circle cx="12" cy="19" r="1.200" fill="currentColor" /></Icon></Slot>
        <Slot $ml={7}><Icon sw={1.700}><path d="M2 9h4l6-5v16l-6-5H2zM15 9q2 3 0 6" /><path d="M18 6.500q4 5.500 0 11M21 4.500q5 7.500 0 15" stroke="#5b6a76" /></Icon></Slot>
        <Slot $ml={7}><Icon sw={1.700}><path d="M9.500 6.500H18q2 0 2 2v8q0 2-2 2H7q-1.500 0-1.500-1.500v-3M22.500 11v3" /><path d="M2 5.500h7V10q0 2-2 2.500V18M3.500 2.500v3M7.500 2.500v3" /><path d="M3 6h5v4.500H3zM10 12h4.500v4H8.500z" fill="currentColor" strokeWidth="1" /></Icon></Slot>
        <TrayText $ml={15.500} $w={82} $right>
          <Tight $ls={-0.900}>21:07</Tight><br /><Tight $ls={0.230}>2022-06-28</Tight>
        </TrayText>
      </Taskbar>
    </Screen>
  );
}
